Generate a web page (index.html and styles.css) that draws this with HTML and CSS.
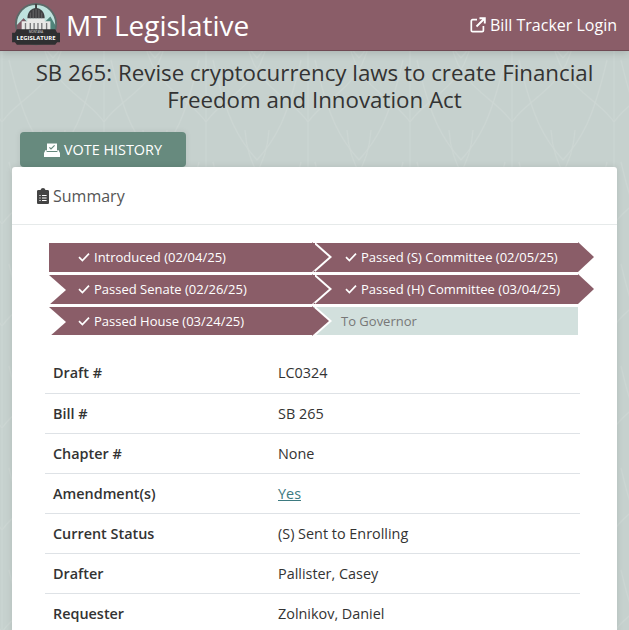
FILE: index.html
```html
<!DOCTYPE html>
<html>
<head>
  <title>SB 265 - MT Legislative</title>
  <meta charset="utf-8">
  <link rel="stylesheet" href="styles.css">
</head>
<body>
  <svg class="leaf-bg" aria-hidden="true">
    <defs>
      <pattern id="leaves" width="102" height="204" patternUnits="userSpaceOnUse" patternTransform="translate(-1 -82)">
        <g fill="none" stroke="#ccd6d3" stroke-width="1.2">
          <path d="M3 0V204M105 0V204"/>
          <path d="M3 204C22 176 62 170 66 110M3 102C22 74 62 68 66 8"/>
          <path d="M3 204C-16 176 -56 170 -60 110M105 204C86 176 46 170 42 110"/>
          <path d="M3 102C-16 74 -56 68 -60 8M105 102C86 74 46 68 42 8"/>
          <path d="M54 140C36 120 24 100 10 40M54 140C72 120 84 100 98 40"/>
          <path d="M54 38C36 18 24 -2 10 -62M54 38C72 18 84 -2 98 -62"/>
          <path d="M54 242C36 222 24 202 10 142M54 242C72 222 84 202 98 142"/>
        </g>
      </pattern>
    </defs>
    <rect width="100%" height="100%" fill="url(#leaves)"/>
  </svg>

  <header class="topbar">
    <div class="brand">
      <svg class="logo" viewBox="0 0 52 48">
        <circle cx="25" cy="23" r="22" fill="#5c6a68"/>
        <circle cx="25" cy="23" r="20" fill="#bfe3de"/>
        <path d="M5 30L12 17L20 25L32 23L40 15L45 24V34H5Z" fill="#4f8379"/>
        <path d="M5 24L12 17L16 22L5 34Z" fill="#7d5a64"/>
        <path d="M10 32V20H16V17H34V20H40V32Z" fill="#e8e8e6"/>
        <path d="M16 17C16 10 20 7 25 6C30 7 34 10 34 17Z" fill="#3e3e40"/>
        <path d="M19 17V11M22 17V8M25 17V7M28 17V8M31 17V11" stroke="#777" stroke-width="0.8"/>
        <rect x="24" y="2" width="2" height="5" fill="#3e3e40"/>
        <path d="M14 22V30M19 22V30M23 22V30M27 22V30M31 22V30M36 22V30" stroke="#77787a" stroke-width="1.4"/>
        <path d="M0 32H3L5 28.5H45L47 32H50V42H47L45 44.5H5L3 42H0Z" fill="#2f2f31"/>
        <text class="logo-small" x="25" y="32.6" text-anchor="middle">MONTANA</text>
        <text class="logo-big" x="25" y="40" text-anchor="middle">LEGISLATURE</text>
      </svg>
      <span class="brand-name">MT Legislative</span>
    </div>
    <a class="login" href="#">
      <svg class="login-icon" viewBox="0 0 16 16">
        <path d="M7 2.6H2.6A1.3 1.3 0 0 0 1.3 3.9V13.4A1.3 1.3 0 0 0 2.6 14.7H12.1A1.3 1.3 0 0 0 13.4 13.4V9" fill="none" stroke="#fff" stroke-width="1.7"/>
        <path d="M6.5 9.5L14 2M9.5 1.2H14.8V6.5" fill="none" stroke="#fff" stroke-width="1.9"/>
      </svg>
      Bill Tracker Login
    </a>
  </header>

  <main class="page">
    <h1 class="bill-title">SB 265: Revise cryptocurrency laws to create Financial Freedom and Innovation Act</h1>

    <a class="vote-btn" href="#">
      <svg class="vote-icon" viewBox="0 0 16 14">
        <path d="M3 0.5H13V8H3Z" fill="#fff"/>
        <path d="M5.4 4.4L7 6L10.6 2.4" fill="none" stroke="#678a7e" stroke-width="1.2"/>
        <path d="M2.6 7H1.6L0 10V14H16V10L14.4 7H13.4V9H2.6Z" fill="#fff"/>
      </svg>
      VOTE HISTORY
    </a>

    <section class="card">
      <div class="card-head">
        <svg class="clip-icon" viewBox="0 0 12 16">
          <path d="M1.3 2H3.6C3.8 0.8 4.8 0 6 0S8.2 0.8 8.4 2H10.7C11.4 2 12 2.6 12 3.3V14.7C12 15.4 11.4 16 10.7 16H1.3C0.6 16 0 15.4 0 14.7V3.3C0 2.6 0.6 2 1.3 2Z" fill="#444"/>
          <path d="M2.4 7.5H3.6M5 7.5H9.6M2.4 10H3.6M5 10H9.6M2.4 12.5H3.6M5 12.5H9.6" stroke="#fff" stroke-width="1.1"/>
        </svg>
        Summary
      </div>

      <div class="card-body">
        <div class="steps">
          <div class="step step-first"><svg class="check" viewBox="0 0 12 10"><path d="M1 5.2L4.4 8.6L11 1.6"/></svg>Introduced (02/04/25)</div>
          <div class="step"><svg class="check" viewBox="0 0 12 10"><path d="M1 5.2L4.4 8.6L11 1.6"/></svg>Passed (S) Committee (02/05/25)</div>
          <div class="step"><svg class="check" viewBox="0 0 12 10"><path d="M1 5.2L4.4 8.6L11 1.6"/></svg>Passed Senate (02/26/25)</div>
          <div class="step"><svg class="check" viewBox="0 0 12 10"><path d="M1 5.2L4.4 8.6L11 1.6"/></svg>Passed (H) Committee (03/04/25)</div>
          <div class="step"><svg class="check" viewBox="0 0 12 10"><path d="M1 5.2L4.4 8.6L11 1.6"/></svg>Passed House (03/24/25)</div>
          <div class="step step-todo">To Governor</div>
        </div>

        <table class="info">
          <tr><th>Draft #</th><td>LC0324</td></tr>
          <tr><th>Bill #</th><td>SB 265</td></tr>
          <tr><th>Chapter #</th><td>None</td></tr>
          <tr><th>Amendment(s)</th><td><a href="#">Yes</a></td></tr>
          <tr><th>Current Status</th><td>(S) Sent to Enrolling</td></tr>
          <tr><th>Drafter</th><td>Pallister, Casey</td></tr>
          <tr><th>Requester</th><td>Zolnikov, Daniel</td></tr>
        </table>
      </div>
    </section>
  </main>
</body>
</html>
```

FILE: styles.css
```css
* {box-sizing: border-box;}
html, body {height: 630px; overflow: hidden;}
body {margin: 0; background: #c6d1ce; color: #333; font-family: "Open Sans", sans-serif; font-size: 14.4px;}

.leaf-bg {position: absolute; left: 0; top: 0; width: 100%; height: 100%;}

.topbar {position: relative; display: flex; justify-content: space-between; align-items: center; height: 51px; padding: 0 12px; background: #8a5d68; border-bottom: 1px solid #6f4a54; box-shadow: 0 2px 8px rgba(0, 0, 0, 0.15);}
.brand {display: flex; align-items: center; gap: 4px;}
.logo {width: 50px; height: 46px;}
.logo-small {font-size: 3px; fill: #ddd; font-family: "Open Sans", sans-serif;}
.logo-big {font-size: 6.2px; font-weight: 700; fill: #fff; font-family: "Open Sans", sans-serif;}
.brand-name {color: #fff; font-size: 28px;}
.login {display: flex; align-items: center; gap: 4px; color: #fff; font-size: 16px; text-decoration: none;}
.login-icon {width: 16px; height: 16px;}

.page {position: relative; padding: 8px 12px 0;}
.bill-title {margin: 0; padding: 0 12px; font-size: 22.3px; font-weight: 400; line-height: 27px; text-align: center; color: #333;}

.vote-btn {display: flex; align-items: center; justify-content: center; gap: 4px; width: 166px; height: 35px; margin: 19px 0 0 8px; background: #678a7e; border-radius: 4px; color: #fff; font-size: 14.4px; text-decoration: none; box-shadow: 0 0 6px rgba(0, 0, 0, 0.08);}
.vote-icon {width: 16px; height: 14px;}

.card {width: 605px; background: #fff; border-radius: 3px 3px 0 0; box-shadow: 0 0 6px rgba(0, 0, 0, 0.1);}
.card-head {display: flex; align-items: center; gap: 4px; height: 58px; padding: 0 25px; border-bottom: 1px solid #e6eaea; font-size: 16px; color: #555;}
.clip-icon {width: 12px; height: 16px;}
.card-body {padding: 18px 37px 0 33px;}

.steps {display: grid; grid-template-columns: 263px 266px; grid-template-rows: 29px 29px 28px; row-gap: 3px; margin-left: 4px;}
.step {position: relative; padding-left: 29px; background: #8a5d68; color: #fff; font-size: 13px; line-height: 29px;}
.step:nth-child(even) {padding-left: 33px;}
.step::before {content: ""; position: absolute; left: 0; top: 0; border-style: solid; border-width: 15px 0 15px 17px; border-color: transparent transparent transparent #fff;}
.step::after {content: ""; position: absolute; z-index: 1; right: -17px; top: -1px; border-style: solid; border-width: 15.5px 0 15.5px 17px; border-color: transparent transparent transparent #8a5d68; filter: drop-shadow(3px 0 0 #fff);}
.step:nth-child(even)::after {right: -16px; border-left-width: 16px; filter: none;}
.step-first::before {display: none;}
.step-todo, .step-todo:nth-child(even) {padding-left: 29px; background: #d2e0dd; color: #777;}
.step-todo::after {display: none;}
.check {width: 12px; height: 10px; margin-right: 4px; fill: none; stroke: #fff; stroke-width: 1.7;}

.info {width: 535px; margin: 18px 0 0; border-collapse: collapse; font-size: 14.4px;}
.info th, .info td {height: 40px; padding: 0 8px; text-align: left; border-bottom: 1px solid #dee2e6;}
.info th {width: 225px; font-weight: 600; color: #333;}
.info td {color: #333;}
.info tr:last-child th, .info tr:last-child td {border-bottom: none;}
.info a {color: #3d7a80;}
```
